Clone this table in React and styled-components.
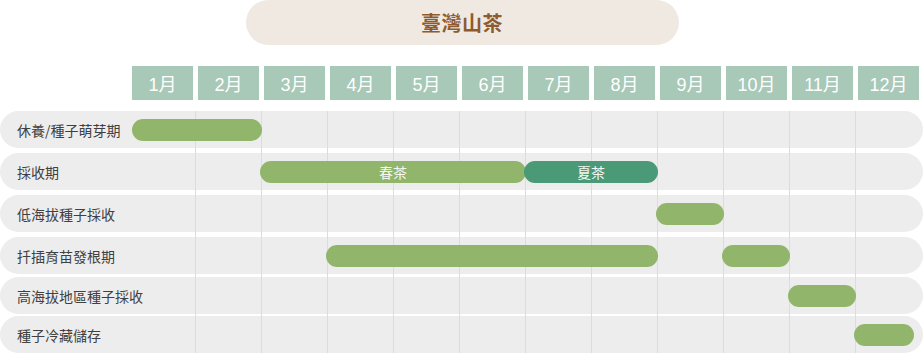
import React from 'react';
import styled, { createGlobalStyle } from 'styled-components';

const months = ['1月', '2月', '3月', '4月', '5月', '6月', '7月', '8月', '9月', '10月', '11月', '12月'];

// start / end are month indexes (0-based, inclusive)
const rows = [
  { label: '休養/種子萌芽期', top: 0, bars: [{ start: 0, end: 1, inset: [4, 0] }] },
  {
    label: '採收期',
    top: 5,
    bars: [
      { start: 2, end: 5, text: '春茶' },
      { start: 6, end: 7, text: '夏茶', dark: true },
    ],
  },
  { label: '低海拔種子採收', top: 5, bars: [{ start: 8, end: 8 }] },
  { label: '扦插育苗發根期', top: 5, bars: [{ start: 3, end: 7 }, { start: 9, end: 9 }] },
  { label: '高海拔地區種子採收', top: 3, bars: [{ start: 10, end: 10 }] },
  { label: '種子冷藏儲存', top: 2, bars: [{ start: 11, end: 11, inset: [0, 8] }] },
];

export default function App() {
  return (
    <Page>
      <GlobalStyle />
      <TitleBar>
        <Title>臺灣山茶</Title>
      </TitleBar>

      <MonthHeader>
        {months.map((m) => (
          <MonthCell key={m}>{m}</MonthCell>
        ))}
      </MonthHeader>

      <Rows>
        <GridLines>
          {months.map((m, i) => (
            <GridColumn key={m} $first={i === 0} />
          ))}
        </GridLines>
        {rows.map((row) => (
          <Row key={row.label} $top={row.top}>
            <Label>{row.label}</Label>
            {row.bars.map((bar) => (
              <Bar
                key={bar.start}
                $start={bar.start}
                $end={bar.end}
                $dark={bar.dark}
                $inset={bar.inset || [0, 0]}
              >
                {bar.text}
              </Bar>
            ))}
          </Row>
        ))}
      </Rows>
    </Page>
  );
}

const GlobalStyle = createGlobalStyle`
  html, body {
    margin: 0;
    padding: 0;
    background: #ffffff;
  }
  body {
    font-family: "Liberation Sans", "Noto Sans CJK TC", sans-serif;
  }
`;

const Page = styled.div`
  width: 924px;
  height: 353px;
  overflow: hidden;
  display: flex;
  flex-direction: column;
`;

const TitleBar = styled.div`
  align-self: center;
  width: 433px;
  height: 45px;
  border-radius: 23px;
  background: #efe9e2;
  display: flex;
  align-items: center;
  justify-content: center;
`;

const Title = styled.h1`
  margin: 0;
  font-family: "Noto Sans CJK TC", sans-serif;
  font-size: 20px;
  font-weight: 700;
  color: #8d5b2f;
  letter-spacing: 0.5px;
`;

const MonthHeader = styled.div`
  margin-top: 21px;
  padding-left: 132px;
  display: grid;
  grid-template-columns: repeat(12, 61px);
  column-gap: 5px;
`;

const MonthCell = styled.div`
  height: 34px;
  background: #a8c8b8;
  color: #ffffff;
  font-size: 18px;
  display: flex;
  align-items: center;
  justify-content: center;
`;

const Rows = styled.div`
  position: relative;
  margin-top: 11px;
  display: flex;
  flex-direction: column;
`;

const GridLines = styled.div`
  position: absolute;
  top: 0;
  bottom: 0;
  left: 129px;
  width: 792px;
  display: grid;
  grid-template-columns: repeat(12, 66px);
  z-index: 1;
  pointer-events: none;
`;

const GridColumn = styled.div`
  border-left: 1px solid ${(p) => (p.$first ? 'transparent' : '#dcdcdc')};
`;

const Row = styled.div`
  margin-top: ${(p) => p.$top}px;
  height: 37px;
  width: 923px;
  border-radius: 19px;
  background: #ededed;
  display: grid;
  grid-template-columns: 129px repeat(12, 66px);
  align-items: center;
`;

const Label = styled.div`
  grid-column: 1;
  grid-row: 1;
  padding-left: 17px;
  font-family: "Noto Sans CJK TC", sans-serif;
  font-size: 14px;
  color: #404040;
  white-space: nowrap;
`;

const Bar = styled.div`
  grid-row: 1;
  grid-column: ${(p) => p.$start + 2} / ${(p) => p.$end + 3};
  position: relative;
  z-index: 2;
  height: 22px;
  margin: 0 ${(p) => p.$inset[1] - 1}px 0 ${(p) => p.$inset[0] - 1}px;
  border-radius: 11px;
  background: ${(p) => (p.$dark ? '#4a9a77' : '#90b56b')};
  color: #f7f7f2;
  font-family: "Noto Sans CJK TC", sans-serif;
  font-size: 14px;
  display: flex;
  align-items: center;
  justify-content: center;
`;
